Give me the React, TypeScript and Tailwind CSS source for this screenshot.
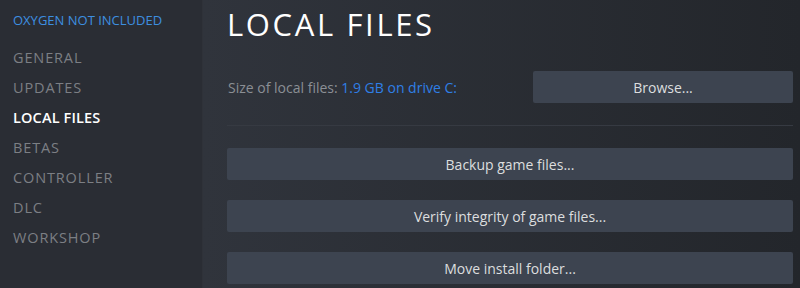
import React from "react";

const navItems = [
  { label: "GENERAL", active: false },
  { label: "UPDATES", active: false },
  { label: "LOCAL FILES", active: true },
  { label: "BETAS", active: false },
  { label: "CONTROLLER", active: false },
  { label: "DLC", active: false },
  { label: "WORKSHOP", active: false },
];

const actions = ["Backup game files...", "Verify integrity of game files...", "Move install folder..."];

const App = () => {
  return (
    <div
      className="flex w-[800px] h-[288px] overflow-hidden bg-[#2b2e35]"
      style={{ fontFamily: '"Open Sans", "Noto Sans", Arial, sans-serif' }}
    >
      <aside className="w-[203px] shrink-0 bg-[#2a2d34] border-r border-[#2f3239] pl-[13px] pt-[11px]">
        <div className="text-[13px] leading-[18px] text-[#3d8fe0]">OXYGEN NOT INCLUDED</div>
        <ul className="mt-[14px] flex flex-col">
          {navItems.map((item) => (
            <li
              key={item.label}
              className={`h-[30px] leading-[30px] text-[14.5px] ${
                item.active ? "text-white font-semibold tracking-[0.01em]" : "text-[#7c7f84] tracking-[0.06em]"
              }`}
            >
              {item.label}
            </li>
          ))}
        </ul>
      </aside>

      <main className="flex-1 pl-[24px] pr-[7px] bg-gradient-to-r from-[#30343c] to-[#23262b]">
        <h1 className="mt-[4px] h-[40px] leading-[40px] text-[31px] text-white tracking-[0.085em]">
          LOCAL FILES
        </h1>

        <div className="mt-[27px] flex items-center">
          <div className="flex-1 pl-[1px] text-[14px] text-[#8b8f95]">
            Size of local files: <span className="text-[#2f7fe6]">1.9 GB on drive C:</span>
          </div>
          <button className="w-[260px] h-[32px] rounded-[2px] bg-[#3d4450] text-[14px] text-[#dcdedf]">
            Browse...
          </button>
        </div>

        <div className="mt-[22px] h-px bg-[#363a42]" />

        <div className="mt-[22px] flex flex-col gap-[20px]">
          {actions.map((label) => (
            <button
              key={label}
              className="w-full h-[32px] rounded-[2px] bg-[#3d4450] text-[14px] text-[#dcdedf]"
            >
              {label}
            </button>
          ))}
        </div>
      </main>
    </div>
  );
};

export default App;
